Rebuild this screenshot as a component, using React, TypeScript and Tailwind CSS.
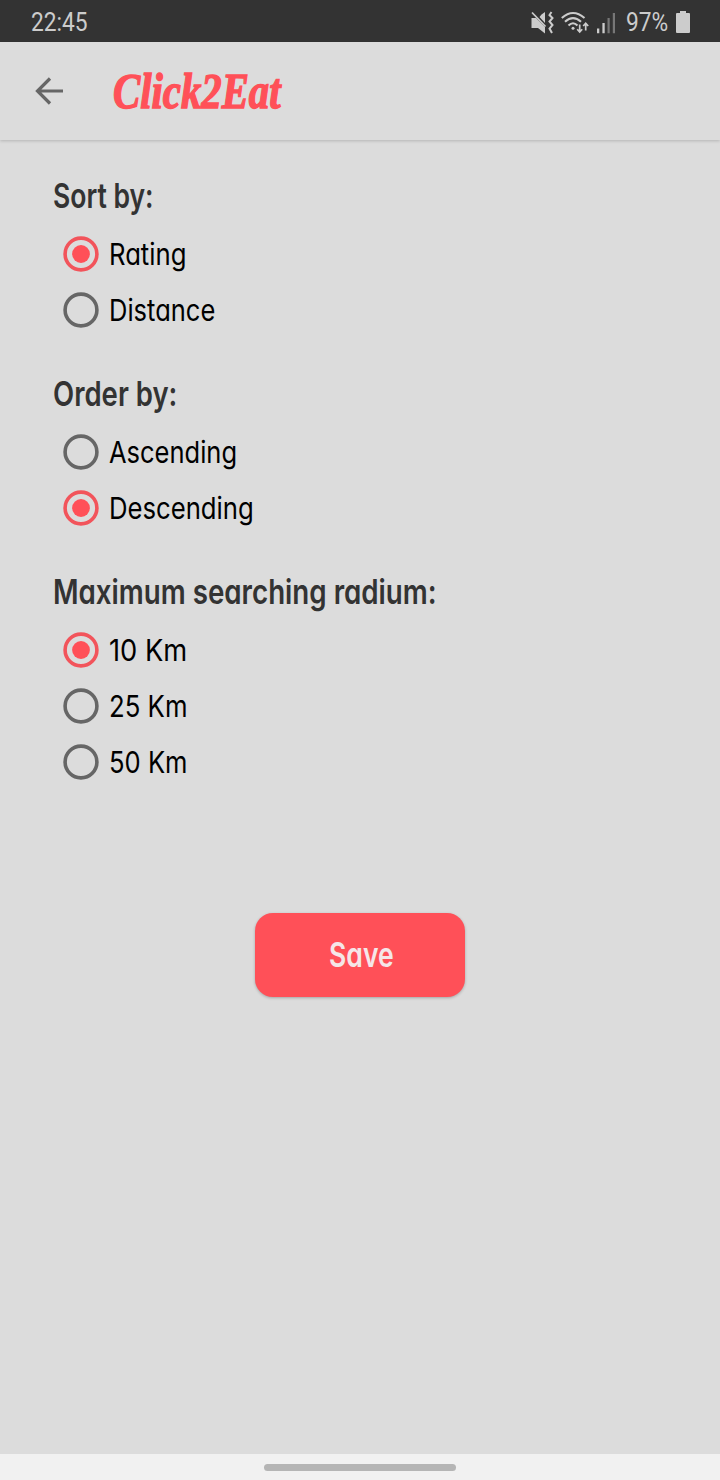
import type { ReactNode } from "react";

const INTER = "font-['Inter','Liberation_Sans',sans-serif] [font-feature-settings:'cv11']";

function Radio({ checked }: { checked: boolean }) {
  const color = checked ? "#f2545b" : "#666666";
  return (
    <svg viewBox="0 0 36 36" className="h-9 w-9 shrink-0">
      <circle cx="18" cy="18" r="15.9" fill="none" stroke={color} strokeWidth="3.6" />
      {checked && <circle cx="18" cy="18" r="8.9" fill="#ff5058" />}
    </svg>
  );
}

function Option({ label, scale, checked = false }: { label: string; scale: string; checked?: boolean }) {
  return (
    <div className="flex h-14 items-center pl-[10px]">
      <Radio checked={checked} />
      <span className={`ml-[10px] origin-left text-[30px] leading-none font-normal whitespace-nowrap text-black ${scale}`}>
        {label}
      </span>
    </div>
  );
}

function Section({ title, scale, children }: { title: string; scale: string; children: ReactNode }) {
  return (
    <section className="flex flex-col items-start">
      <h2 className={`flex h-[60px] origin-left items-center text-[34px] leading-none font-semibold whitespace-nowrap text-[#333333] ${scale}`}>
        {title}
      </h2>
      {children}
    </section>
  );
}

function StatusBar() {
  return (
    <div className="flex h-[42px] items-center justify-between bg-[#333333] pt-[2px] pr-[30px] pl-[31px] font-['Roboto',sans-serif] text-[25px] leading-none text-[#cccccc]">
      <span className="origin-left scale-x-[0.91]">22:45</span>
      <div className="flex items-center">
        <svg viewBox="0 0 23 23" className="h-[23px] w-[23px]" fill="#cccccc">
          <path d="M.5 7H5L14 16V22.500L7 17H.5zM10.500 3.500L14 1V12L8.500 6z" />
          <path d="M1 1.500L14.500 15.500" stroke="#cccccc" strokeWidth="1.8" />
          <path d="M20.500 1l-2 3 3 3-3 3.500 3 3.500-3 3.500 2.500 4.500" fill="none" stroke="#cccccc" strokeWidth="2" />
        </svg>
        <svg viewBox="0 0 28 23" className="ml-[7px] h-[23px] w-7" fill="none" stroke="#cccccc" strokeWidth="2.100">
          <path d="M.8 7Q12-3 23.500 7M4 10.800Q12 3.500 20 10.800M7.500 14.500Q12 10 16.500 14.500" />
          <circle cx="12" cy="17.200" r="1.500" fill="#cccccc" stroke="none" />
          <path d="M18.700 13.500v7.500M16.200 18.200l2.500 2.800 2.500-2.800M24.700 19.500v-7.200M22.200 15l2.500-2.800 2.500 2.800" strokeWidth="1.700" />
        </svg>
        <svg viewBox="0 0 19 23" className="ml-[8px] h-[23px] w-[19px]">
          <path d="M0 17.500h2.300V22.300H0zM5.400 12h2.300v10.300H5.400z" fill="#cccccc" />
          <path d="M10.500 7h2.200v15.300h-2.200zM15.800 2H18v20.300h-2.200z" fill="#777777" />
        </svg>
        <span className="ml-[10px] w-[50px] origin-left scale-x-[0.91]">97%</span>
        <svg viewBox="0 0 14 22" className="h-[22px] w-[14px]" fill="#cccccc">
          <path d="M4 0h6v2h3q1 0 1 1v18q0 1-1 1H1q-1 0-1-1V3q0-1 1-1h3z" />
        </svg>
      </div>
    </div>
  );
}

export default function App() {
  return (
    <div className={`flex h-[1480px] w-[720px] flex-col overflow-hidden bg-[#dcdcdc] ${INTER}`}>
      <StatusBar />
      <header className="flex h-[98px] shrink-0 items-center pl-[35px] shadow-[0_1px_3px_rgba(0,0,0,0.18)]">
        <svg viewBox="0 0 28 28" className="h-7 w-7" fill="none" stroke="#666666" strokeWidth="3.2">
          <path d="M28 14H2M15 1.500L2.500 14l12.500 12.500" />
        </svg>
        <h1 className="ml-[50px] origin-left scale-x-[0.815] font-['Liberation_Serif',serif] text-[50px] leading-none font-bold whitespace-nowrap text-[#ff5058] italic [-webkit-text-stroke:1.4px_#ff5058]">
          Click2Eat
        </h1>
      </header>
      <main className="flex grow flex-col gap-[26px] pt-[26px] pl-[53px]">
        <Section title="Sort by:" scale="scale-x-[0.78]">
          <Option label="Rating" scale="scale-x-[0.856]" checked />
          <Option label="Distance" scale="scale-x-[0.85]" />
        </Section>
        <Section title="Order by:" scale="scale-x-[0.809]">
          <Option label="Ascending" scale="scale-x-[0.85]" />
          <Option label="Descending" scale="scale-x-[0.856]" checked />
        </Section>
        <Section title="Maximum searching radium:" scale="scale-x-[0.815]">
          <Option label="10 Km" scale="scale-x-[0.91]" checked />
          <Option label="25 Km" scale="scale-x-[0.858]" />
          <Option label="50 Km" scale="scale-x-[0.853]" />
        </Section>
        <button className="mt-[97px] ml-[202px] flex h-[84px] w-[210px] items-center justify-center rounded-[18px] bg-[#ff5058] text-[34px] leading-none font-semibold text-[#f5e6e8] shadow-[0_1px_3px_rgba(0,0,0,0.25)]">
          <span className="ml-[2px] scale-x-[0.78]">Save</span>
        </button>
      </main>
      <div className="flex h-[26px] shrink-0 items-center justify-center bg-[#f1f1f1]">
        <div className="h-[7px] w-48 rounded-full bg-[#b5b5b5]" />
      </div>
    </div>
  );
}
